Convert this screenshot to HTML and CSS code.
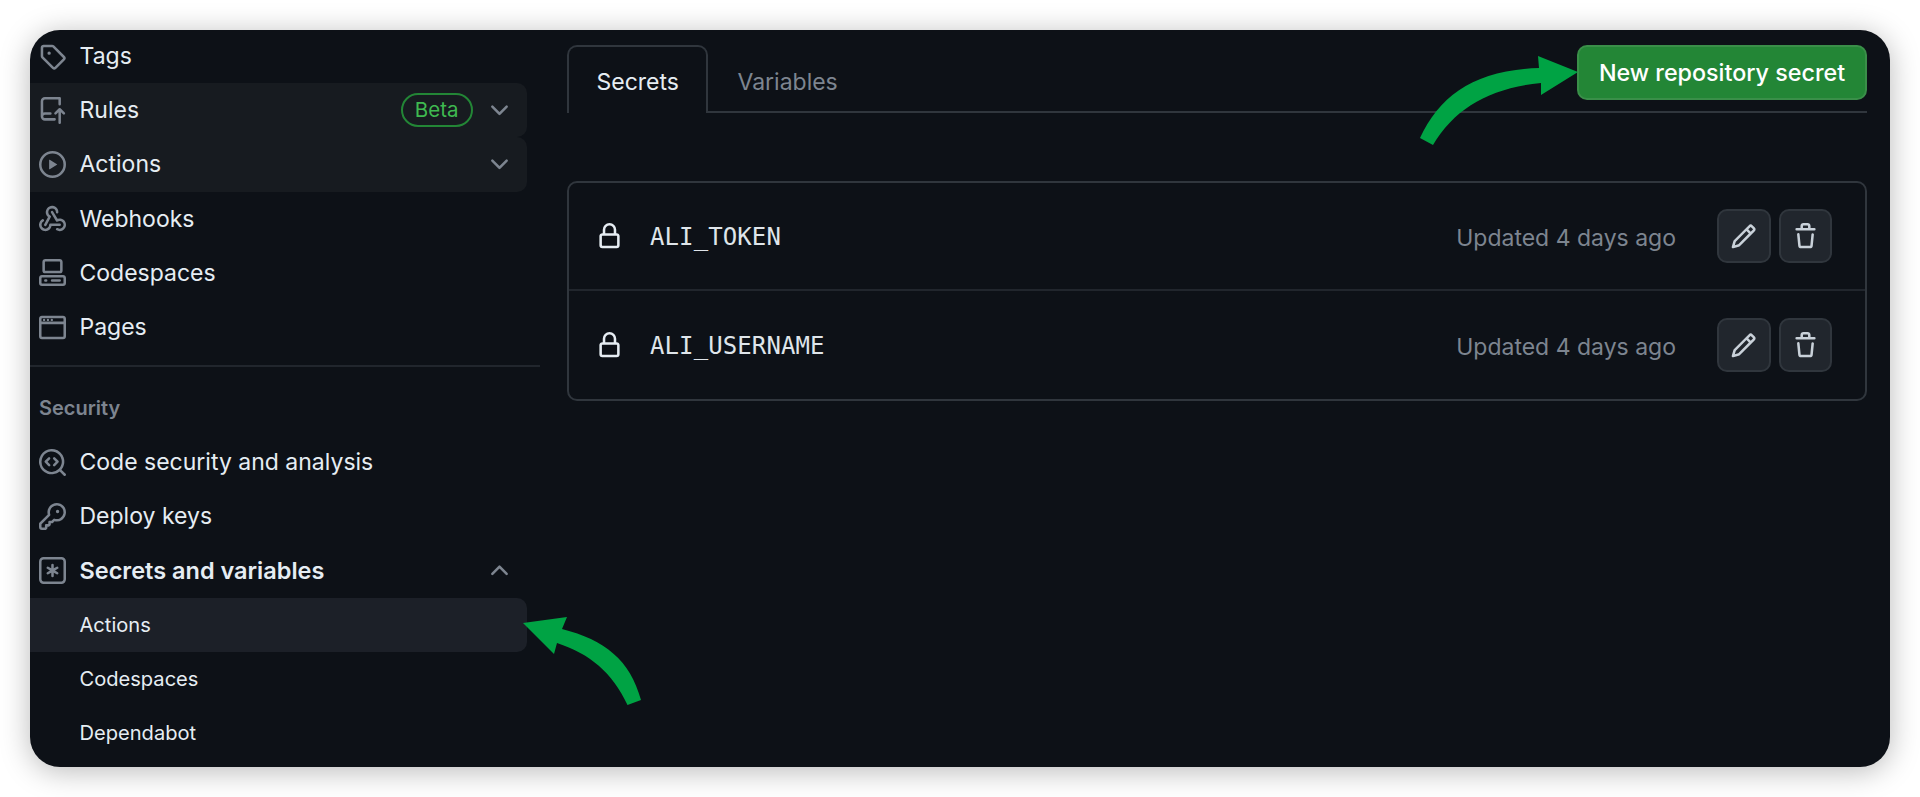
FILE: index.html
```html
<!DOCTYPE html>
<html lang="en">
<head>
    <meta charset="UTF-8">
    <meta name="viewport" content="width=device-width, initial-scale=1.0">
    <title>Secrets and variables</title>
    <link rel="stylesheet" href="styles.css">
</head>
<body>
    <div class="window">
        <nav class="sidebar">
            <ul class="nav-list nav-first">
                <li class="nav-row">
                    <svg class="icon" viewBox="0 0 16 16"><path d="M1 7.775V2.75C1 1.784 1.784 1 2.75 1h5.025c.464 0 .91.184 1.238.513l6.25 6.25a1.75 1.75 0 0 1 0 2.474l-5.026 5.026a1.75 1.75 0 0 1-2.474 0l-6.25-6.25A1.752 1.752 0 0 1 1 7.775Zm1.5 0c0 .066.026.13.073.177l6.25 6.25a.25.25 0 0 0 .354 0l5.025-5.025a.25.25 0 0 0 0-.354l-6.25-6.25a.25.25 0 0 0-.177-.073H2.75a.25.25 0 0 0-.25.25ZM6 5a1 1 0 1 1 0 2 1 1 0 0 1 0-2Z"/></svg>
                    <span class="nav-label">Tags</span>
                </li>
                <li class="nav-row nav-hover">
                    <svg class="icon" viewBox="0 0 16 16"><path d="M1 2.5A2.5 2.5 0 0 1 3.5 0h8.75a.75.75 0 0 1 .75.75v3.5a.75.75 0 0 1-1.5 0V1.5h-8a1 1 0 0 0-1 1v6.708A2.493 2.493 0 0 1 3.5 9h3.25a.75.75 0 0 1 0 1.5H3.5a1 1 0 0 0 0 2h5.75a.75.75 0 0 1 0 1.5H3.5A2.5 2.5 0 0 1 1 11.5Zm13.23 7.79h-.001l-1.224-1.224v6.184a.75.75 0 0 1-1.5 0V9.066L10.28 10.29a.75.75 0 0 1-1.06-1.061l2.505-2.504a.75.75 0 0 1 1.06 0L15.29 9.23a.751.751 0 0 1-.018 1.042.751.751 0 0 1-1.042.018Z"/></svg>
                    <span class="nav-label">Rules</span>
                    <span class="badge">Beta</span>
                    <svg class="icon chevron" viewBox="0 0 16 16"><path d="M12.78 5.22a.749.749 0 0 1 0 1.06l-4.25 4.25a.749.749 0 0 1-1.06 0L3.22 6.28a.749.749 0 1 1 1.06-1.06L8 8.939l3.72-3.719a.749.749 0 0 1 1.06 0Z"/></svg>
                </li>
                <li class="nav-row nav-hover">
                    <svg class="icon" viewBox="0 0 16 16"><path d="M8 0a8 8 0 1 1 0 16A8 8 0 0 1 8 0ZM1.5 8a6.5 6.5 0 1 0 13 0 6.5 6.5 0 0 0-13 0Zm4.879-2.773 4.264 2.559a.25.25 0 0 1 0 .428l-4.264 2.559A.25.25 0 0 1 6 10.559V5.442a.25.25 0 0 1 .379-.215Z"/></svg>
                    <span class="nav-label">Actions</span>
                    <svg class="icon chevron" viewBox="0 0 16 16"><path d="M12.78 5.22a.749.749 0 0 1 0 1.06l-4.25 4.25a.749.749 0 0 1-1.06 0L3.22 6.28a.749.749 0 1 1 1.06-1.06L8 8.939l3.72-3.719a.749.749 0 0 1 1.06 0Z"/></svg>
                </li>
                <li class="nav-row">
                    <svg class="icon" viewBox="0 0 16 16"><path d="M5.5 4.25a2.25 2.25 0 0 1 4.5 0 .75.75 0 0 0 1.5 0 3.75 3.75 0 1 0-6.14 2.889l-2.272 4.258a.75.75 0 0 0 1.324.706L7 7.25a.75.75 0 0 0-.309-1.015A2.25 2.25 0 0 1 5.5 4.25Z"/><path d="M7.364 3.607a.75.75 0 0 1 1.03.257l2.608 4.349a3.75 3.75 0 1 1-.628 6.785.75.75 0 0 1 .752-1.299 2.25 2.25 0 1 0-.033-3.88.75.75 0 0 1-1.03-.256L7.107 4.636a.75.75 0 0 1 .257-1.03Z"/><path d="M2.9 8.776A.75.75 0 0 1 2.625 9.8 2.25 2.25 0 1 0 6 11.75a.75.75 0 0 1 .75-.751h5.5a.75.75 0 0 1 0 1.5H7.425a3.751 3.751 0 1 1-5.55-3.998.75.75 0 0 1 1.024.274Z"/></svg>
                    <span class="nav-label">Webhooks</span>
                </li>
                <li class="nav-row">
                    <svg class="icon" viewBox="0 0 16 16"><path d="M0 11.25c0-.966.784-1.75 1.75-1.75h12.5c.966 0 1.75.784 1.75 1.75v3A1.75 1.75 0 0 1 14.25 16H1.75A1.75 1.75 0 0 1 0 14.25Zm2-9.5C2 .784 2.784 0 3.75 0h8.5C13.216 0 14 .784 14 1.75v5a1.75 1.75 0 0 1-1.75 1.75h-8.5A1.75 1.75 0 0 1 2 6.75Zm1.75-.25a.25.25 0 0 0-.25.25v5c0 .138.112.25.25.25h8.5a.25.25 0 0 0 .25-.25v-5a.25.25 0 0 0-.25-.25Zm-2 9.5a.25.25 0 0 0-.25.25v3c0 .138.112.25.25.25h12.5a.25.25 0 0 0 .25-.25v-3a.25.25 0 0 0-.25-.25Z"/><path d="M7 12.75a.75.75 0 0 1 .75-.75h4.5a.75.75 0 0 1 0 1.5h-4.5a.75.75 0 0 1-.75-.75Zm-4 0a.75.75 0 0 1 .75-.75h.5a.75.75 0 0 1 0 1.5h-.5a.75.75 0 0 1-.75-.75Z"/></svg>
                    <span class="nav-label">Codespaces</span>
                </li>
                <li class="nav-row">
                    <svg class="icon" viewBox="0 0 16 16"><path d="M0 2.75C0 1.784.784 1 1.75 1h12.5c.966 0 1.75.784 1.75 1.75v10.5A1.75 1.75 0 0 1 14.25 15H1.75A1.75 1.75 0 0 1 0 13.25ZM14.5 6h-13v7.25c0 .138.112.25.25.25h12.5a.25.25 0 0 0 .25-.25Zm0-3.25a.25.25 0 0 0-.25-.25H1.75a.25.25 0 0 0-.25.25V4.5h13Z"/><circle cx="3" cy="3.5" r=".7"/><circle cx="5.3" cy="3.5" r=".7"/><circle cx="7.6" cy="3.5" r=".7"/></svg>
                    <span class="nav-label">Pages</span>
                </li>
            </ul>

            <hr class="nav-divider">
            <h3 class="nav-heading">Security</h3>

            <ul class="nav-list">
                <li class="nav-row">
                    <svg class="icon" viewBox="0 0 16 16"><path d="M8.47 4.97a.75.75 0 0 0 0 1.06L9.94 7.5 8.47 8.97a.75.75 0 1 0 1.06 1.06l2-2a.75.75 0 0 0 0-1.06l-2-2a.75.75 0 0 0-1.06 0ZM6.53 6.03a.75.75 0 0 0-1.06-1.06l-2 2a.75.75 0 0 0 0 1.06l2 2a.75.75 0 1 0 1.06-1.06L5.06 7.5l1.47-1.47Z"/><path d="M12.246 13.307a7.501 7.501 0 1 1 1.06-1.06l2.474 2.473a.749.749 0 0 1-.326 1.275.749.749 0 0 1-.734-.215ZM1.5 7.5a6.002 6.002 0 0 0 3.608 5.504 6.002 6.002 0 0 0 6.486-1.117.748.748 0 0 1 .292-.293A6 6 0 1 0 1.5 7.5Z"/></svg>
                    <span class="nav-label">Code security and analysis</span>
                </li>
                <li class="nav-row">
                    <svg class="icon" viewBox="0 0 16 16"><path d="M10.5 0a5.499 5.499 0 1 1-1.288 10.848l-.932.932a.749.749 0 0 1-.53.22H7v.75a.749.749 0 0 1-.22.53l-.5.5a.749.749 0 0 1-.53.22H5v.75a.749.749 0 0 1-.22.53l-.5.5a.749.749 0 0 1-.53.22h-2A1.75 1.75 0 0 1 0 14.25v-2c0-.199.079-.389.22-.53l4.932-4.932A5.5 5.5 0 0 1 10.5 0Zm-4 5.5c-.001.431.069.86.205 1.269a.75.75 0 0 1-.181.768L1.5 12.56v1.69c0 .138.112.25.25.25h1.69l.06-.06v-1.19a.75.75 0 0 1 .75-.75h1.19l.06-.06v-1.19a.75.75 0 0 1 .75-.75h1.19l1.023-1.025a.75.75 0 0 1 .768-.18A4 4 0 1 0 6.5 5.5ZM11 6a1 1 0 1 1 0-2 1 1 0 0 1 0 2Z"/></svg>
                    <span class="nav-label">Deploy keys</span>
                </li>
                <li class="nav-row">
                    <svg class="icon" viewBox="0 0 16 16"><path d="M0 2.75A2.75 2.75 0 0 1 2.75 0h10.5A2.75 2.75 0 0 1 16 2.75v10.5A2.75 2.75 0 0 1 13.25 16H2.75A2.75 2.75 0 0 1 0 13.25ZM2.75 1.5c-.69 0-1.25.56-1.25 1.25v10.5c0 .69.56 1.25 1.25 1.25h10.5c.69 0 1.25-.56 1.25-1.25V2.75c0-.69-.56-1.25-1.25-1.25Z"/><path d="M8 4a.75.75 0 0 1 .75.75V6.7l1.69-.975a.75.75 0 0 1 .75 1.3L9.5 8l1.69.976a.75.75 0 0 1-.75 1.298L8.75 9.3v1.951a.75.75 0 0 1-1.5 0V9.299l-1.69.976a.75.75 0 0 1-.75-1.3L6.5 8l-1.69-.975a.75.75 0 0 1 .75-1.3l1.69.976V4.75A.75.75 0 0 1 8 4Z"/></svg>
                    <span class="nav-label nav-strong">Secrets and variables</span>
                    <svg class="icon chevron" viewBox="0 0 16 16"><path d="M3.22 10.53a.749.749 0 0 1 0-1.06l4.25-4.25a.749.749 0 0 1 1.06 0l4.25 4.25a.749.749 0 1 1-1.06 1.06L8 6.811 4.28 10.53a.749.749 0 0 1-1.06 0Z"/></svg>
                </li>
                <li class="nav-row nav-sub nav-active"><span class="nav-label">Actions</span></li>
                <li class="nav-row nav-sub"><span class="nav-label">Codespaces</span></li>
                <li class="nav-row nav-sub"><span class="nav-label">Dependabot</span></li>
            </ul>
        </nav>

        <main class="content">
            <div class="tabs">
                <div class="tab-list">
                    <span class="tab tab-active">Secrets</span>
                    <span class="tab">Variables</span>
                </div>
                <button class="btn-primary">New repository secret</button>
            </div>

            <div class="secret-box">
                <div class="secret-row">
                    <svg class="icon lock" viewBox="0 0 16 16"><path d="M4 4a4 4 0 0 1 8 0v2h.25c.966 0 1.75.784 1.75 1.75v5.5A1.75 1.75 0 0 1 12.25 15h-8.5A1.75 1.75 0 0 1 2 13.25v-5.5C2 6.784 2.784 6 3.75 6H4Zm8.25 3.5h-8.5a.25.25 0 0 0-.25.25v5.5c0 .138.112.25.25.25h8.5a.25.25 0 0 0 .25-.25v-5.5a.25.25 0 0 0-.25-.25ZM10.5 6V4a2.5 2.5 0 1 0-5 0v2Z"/></svg>
                    <span class="secret-name">ALI_TOKEN</span>
                    <span class="secret-date">Updated 4 days ago</span>
                    <div class="secret-actions">
                        <button class="btn-icon"><svg class="icon" viewBox="0 0 16 16"><path d="M11.013 1.427a1.75 1.75 0 0 1 2.474 0l1.086 1.086a1.75 1.75 0 0 1 0 2.474l-8.61 8.61c-.21.21-.47.364-.756.445l-3.251.93a.75.75 0 0 1-.927-.928l.929-3.25c.081-.286.235-.547.445-.758l8.61-8.61Zm.176 4.823L9.75 4.81l-6.286 6.287a.253.253 0 0 0-.064.108l-.558 1.953 1.953-.558a.253.253 0 0 0 .108-.064Zm1.238-3.763a.25.25 0 0 0-.354 0L10.811 3.75l1.439 1.44 1.263-1.263a.25.25 0 0 0 0-.354Z"/></svg></button>
                        <button class="btn-icon"><svg class="icon" viewBox="0 0 16 16"><path d="M11 1.75V3h2.25a.75.75 0 0 1 0 1.5H2.75a.75.75 0 0 1 0-1.5H5V1.75C5 .784 5.784 0 6.75 0h2.5C10.216 0 11 .784 11 1.75ZM4.496 6.675l.66 6.6a.25.25 0 0 0 .249.225h5.19a.25.25 0 0 0 .249-.225l.66-6.6a.75.75 0 0 1 1.492.149l-.66 6.6A1.748 1.748 0 0 1 10.595 15h-5.19a1.75 1.75 0 0 1-1.741-1.575l-.66-6.6a.75.75 0 1 1 1.492-.15ZM6.5 1.75V3h3V1.75a.25.25 0 0 0-.25-.25h-2.5a.25.25 0 0 0-.25.25Z"/></svg></button>
                    </div>
                </div>
                <div class="secret-row">
                    <svg class="icon lock" viewBox="0 0 16 16"><path d="M4 4a4 4 0 0 1 8 0v2h.25c.966 0 1.75.784 1.75 1.75v5.5A1.75 1.75 0 0 1 12.25 15h-8.5A1.75 1.75 0 0 1 2 13.25v-5.5C2 6.784 2.784 6 3.75 6H4Zm8.25 3.5h-8.5a.25.25 0 0 0-.25.25v5.5c0 .138.112.25.25.25h8.5a.25.25 0 0 0 .25-.25v-5.5a.25.25 0 0 0-.25-.25ZM10.5 6V4a2.5 2.5 0 1 0-5 0v2Z"/></svg>
                    <span class="secret-name">ALI_USERNAME</span>
                    <span class="secret-date">Updated 4 days ago</span>
                    <div class="secret-actions">
                        <button class="btn-icon"><svg class="icon" viewBox="0 0 16 16"><path d="M11.013 1.427a1.75 1.75 0 0 1 2.474 0l1.086 1.086a1.75 1.75 0 0 1 0 2.474l-8.61 8.61c-.21.21-.47.364-.756.445l-3.251.93a.75.75 0 0 1-.927-.928l.929-3.25c.081-.286.235-.547.445-.758l8.61-8.61Zm.176 4.823L9.75 4.81l-6.286 6.287a.253.253 0 0 0-.064.108l-.558 1.953 1.953-.558a.253.253 0 0 0 .108-.064Zm1.238-3.763a.25.25 0 0 0-.354 0L10.811 3.75l1.439 1.44 1.263-1.263a.25.25 0 0 0 0-.354Z"/></svg></button>
                        <button class="btn-icon"><svg class="icon" viewBox="0 0 16 16"><path d="M11 1.75V3h2.25a.75.75 0 0 1 0 1.5H2.75a.75.75 0 0 1 0-1.5H5V1.75C5 .784 5.784 0 6.75 0h2.5C10.216 0 11 .784 11 1.75ZM4.496 6.675l.66 6.6a.25.25 0 0 0 .249.225h5.19a.25.25 0 0 0 .249-.225l.66-6.6a.75.75 0 0 1 1.492.149l-.66 6.6A1.748 1.748 0 0 1 10.595 15h-5.19a1.75 1.75 0 0 1-1.741-1.575l-.66-6.6a.75.75 0 1 1 1.492-.15ZM6.5 1.75V3h3V1.75a.25.25 0 0 0-.25-.25h-2.5a.25.25 0 0 0-.25.25Z"/></svg></button>
                    </div>
                </div>
            </div>
        </main>
    </div>

    <!-- green annotation arrows drawn over the screenshot -->
    <svg class="arrows" viewBox="0 0 1920 797">
        <path d="M1420 138C1440 95 1475 70 1539 68L1538 56 1578 72 1541 95 1541 83C1490 88 1455 108 1433 145Z"/>
        <path d="M641 700C630 660 605 640 562 629L567 617 523 623 554 654 557 643C590 654 612 672 627.5 705Z"/>
    </svg>
</body>
</html>
```

FILE: styles.css
```css
* {
    box-sizing: border-box;
}
body {
    margin: 0;
    height: 797px;
    overflow: hidden;
    position: relative;
    background-color: #fff;
    font-family: Inter, "Liberation Sans", sans-serif;
    color: #e6edf3;
}
.window {
    display: flex;
    width: 1860px;
    height: 737px;
    margin: 30px;
    overflow: hidden;
    border-radius: 30px;
    background-color: #0d1117;
    box-shadow: 0 4px 30px rgba(0,0,0,0.28);
}
.icon {
    display: block;
    flex: none;
    width: 27px;
    height: 27px;
    fill: #7d8590;
}

/* sidebar */
.sidebar {
    flex: none;
    width: 510px;
}
.nav-list {
    width: 497px;
    margin: 0;
    padding: 0;
    list-style: none;
}
.nav-first {
    margin-top: -1px;
}
.nav-row {
    display: flex;
    align-items: center;
    gap: 13.5px;
    height: 54.2px;
    padding: 0 14px 0 9px;
    border-radius: 0 10px 10px 0;
    font-size: 23px;
}
.nav-hover {
    background-color: #171b20;
}
.nav-label {
    flex: 1;
}
.nav-strong {
    font-size: 23.5px;
    font-weight: 600;
}
.nav-sub {
    padding-left: 49.5px;
    font-size: 20.1px;
}
.nav-active {
    background-color: #1c2028;
}
.badge {
    height: 34px;
    padding: 0 12px;
    border: 2px solid #238636;
    border-radius: 17px;
    font-size: 20.5px;
    line-height: 30px;
    color: #3fb950;
}
.nav-divider {
    height: 2px;
    margin: 11px 0 0;
    border: 0;
    background-color: #21262d;
}
.nav-heading {
    margin: 27px 0 13px 9px;
    font-size: 20px;
    line-height: 28px;
    font-weight: 600;
    color: #7d8590;
}

/* main */
.content {
    flex: none;
    width: 1300px;
    margin-left: 27px;
    padding-top: 15px;
}
.tabs {
    display: flex;
    justify-content: space-between;
    align-items: flex-start;
    height: 68px;
    border-bottom: 2px solid #30363d;
}
.tab-list {
    display: flex;
}
.tab {
    height: 68px;
    padding: 0 29px;
    font-size: 23px;
    line-height: 74px;
    color: #7d8590;
}
.tab-active {
    padding: 0 27.5px;
    border: 2px solid #30363d;
    border-bottom: 0;
    border-radius: 10px 10px 0 0;
    color: #e6edf3;
    background-color: #0d1117;
    line-height: 70px;
}
.btn-primary {
    width: 290px;
    height: 55px;
    border: 2px solid #3a8f49;
    border-radius: 10px;
    background-color: #238636;
    color: #fff;
    font-family: inherit;
    font-size: 23.3px;
    font-weight: 500;
}
.secret-box {
    height: 220px;
    margin-top: 68px;
    border: 2px solid #30363d;
    border-radius: 10px;
}
.secret-row {
    display: flex;
    align-items: center;
    height: 106px;
    padding: 0 33px 0 27px;
}
.secret-row + .secret-row {
    height: 110px;
    border-top: 2px solid #21262d;
}
.lock {
    fill: #e6edf3;
}
.secret-name {
    flex: 1;
    margin-left: 27px;
    padding-top: 2px;
    font-family: "DejaVu Sans Mono", monospace;
    font-size: 24px;
    letter-spacing: .1px;
    color: #dfe5ea;
}
.secret-date {
    padding-top: 3px;
    font-size: 23px;
    color: #7d8590;
}
.secret-actions {
    display: flex;
    gap: 8px;
    margin-left: 41px;
}
.btn-icon {
    display: flex;
    align-items: center;
    justify-content: center;
    width: 53.5px;
    height: 54px;
    padding: 0;
    border: 2px solid #30363d;
    border-radius: 10px;
    background-color: #21262d;
}
.btn-icon .icon {
    fill: #c9d1d9;
}

/* annotation overlay */
.arrows {
    position: absolute;
    top: 0;
    left: 0;
    width: 1920px;
    height: 797px;
    fill: #00a344;
    pointer-events: none;
}
```
